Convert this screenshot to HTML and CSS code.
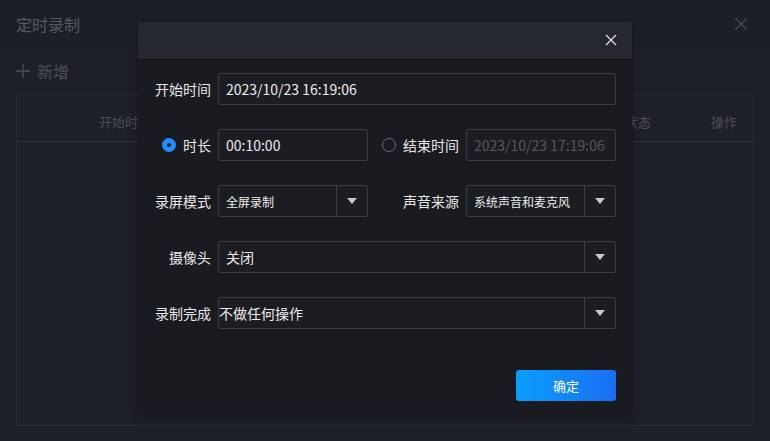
FILE: index.html
```html
<!DOCTYPE html>
<html lang="zh-CN">
<head>
  <meta charset="UTF-8">
  <title>定时录制</title>
  <link rel="stylesheet" href="styles.css">
</head>
<body>
  <!-- 背景页面 -->
  <div class="page">
    <div class="page-header">
      <span class="page-title">定时录制</span>
      <svg class="page-close" width="14" height="14" viewBox="0 0 14 14">
        <path d="M1 1 L13 13 M13 1 L1 13" stroke="#4a4d56" stroke-width="1.2" fill="none"/>
      </svg>
    </div>
    <div class="toolbar">
      <svg class="plus" width="14" height="14" viewBox="0 0 14 14">
        <path d="M7 0 V14 M0 7 H14" stroke="#4c4f58" stroke-width="1.4" fill="none"/>
      </svg>
      新增
    </div>
    <div class="table">
      <div class="table-head">
        <span class="th th-start">开始时间</span>
        <span class="th th-state">状态</span>
        <span class="th th-op">操作</span>
      </div>
    </div>
  </div>

  <!-- 弹窗 -->
  <div class="dialog">
    <div class="dialog-header">
      <svg class="dialog-close" width="12" height="12" viewBox="0 0 12 12">
        <path d="M1 1 L11 11 M11 1 L1 11" stroke="#e0e0e0" stroke-width="1.3" fill="none"/>
      </svg>
    </div>
    <div class="dialog-body">

      <div class="row">
        <label class="lbl">开始时间</label>
        <div class="field wide">2023/10/23 16:19:06</div>
      </div>

      <div class="row">
        <div class="half">
          <label class="lbl"><span class="radio checked"></span>时长</label>
          <div class="field">00:10:00</div>
        </div>
        <div class="half">
          <label class="lbl lbl-r"><span class="radio"></span>结束时间</label>
          <div class="field disabled">2023/10/23 17:19:06</div>
        </div>
      </div>

      <div class="row">
        <div class="half">
          <label class="lbl">录屏模式</label>
          <div class="field select small">全屏录制<span class="arrow"></span></div>
        </div>
        <div class="half">
          <label class="lbl lbl-r">声音来源</label>
          <div class="field select small">系统声音和麦克风<span class="arrow"></span></div>
        </div>
      </div>

      <div class="row">
        <label class="lbl">摄像头</label>
        <div class="field wide select">关闭<span class="arrow"></span></div>
      </div>

      <div class="row">
        <label class="lbl">录制完成</label>
        <div class="field wide select flush">不做任何操作<span class="arrow"></span></div>
      </div>

      <div class="footer">
        <button class="btn-ok">确定</button>
      </div>
    </div>
  </div>
</body>
</html>
```

FILE: styles.css
```css
body {
  margin: 0;
  padding: 0;
  width: 770px;
  height: 441px;
  overflow: hidden;
  background-color: #1e2029;
  font-family: "Noto Sans CJK SC", "Noto Sans", sans-serif;
  color: #e8e8e8;
  position: relative;
}

.page {
  height: 441px;
}

.page-header {
  height: 48px;
  background-color: #1d1f27;
  display: flex;
  align-items: center;
  justify-content: space-between;
  padding: 0 22px 0 16px;
}

.page-title {
  font-size: 16px;
  color: #565962;
}

.toolbar {
  height: 46px;
  display: flex;
  align-items: center;
  padding: 0 16px;
  font-size: 16px;
  color: #4c4f58;
  gap: 7px;
}

.table {
  margin: 1px 16px 0;
  height: 329px;
  border: 1px solid #262932;
}

.table-head {
  height: 45px;
  border-bottom: 1px solid #2e313a;
  position: relative;
  font-size: 13px;
  color: #4a4d56;
}

.th {
  position: absolute;
  top: 16px;
}

.th-start { left: 82px; }
.th-state { left: 608px; }
.th-op { left: 694px; }

/* 弹窗 */
.dialog {
  position: absolute;
  left: 138px;
  top: 22px;
  width: 494px;
  height: 395px;
  background-color: #1a1b20;
  box-shadow: 0 0 8px rgba(0, 0, 0, 0.3);
}

.dialog-header {
  height: 35px;
  background-color: #252830;
  border-bottom: 1px solid #2e3038;
  display: flex;
  align-items: center;
  justify-content: flex-end;
  padding-right: 15px;
}

.dialog-body {
  padding: 15px 16px 16px 0;
  display: flex;
  flex-direction: column;
  gap: 24px;
}

.row {
  display: flex;
  height: 32px;
}

.half {
  display: flex;
}

.lbl {
  width: 73px;
  padding-right: 7px;
  flex-shrink: 0;
  display: flex;
  align-items: center;
  justify-content: flex-end;
  font-size: 14px;
  color: #e8e8e8;
}

.lbl-r {
  width: 91px;
}

.radio {
  width: 14px;
  height: 14px;
  box-sizing: border-box;
  border-radius: 50%;
  border: 1px solid #6a6c72;
  margin-right: 7px;
  position: relative;
}

.radio.checked {
  background-color: #1e8fff;
  border-color: #1e8fff;
}

.radio.checked::after {
  content: "";
  position: absolute;
  left: 4px;
  top: 4px;
  width: 4px;
  height: 4px;
  border-radius: 50%;
  background-color: #1a1b20;
}

.field {
  width: 150px;
  height: 32px;
  box-sizing: border-box;
  border: 1px solid #3a3c42;
  border-radius: 2px;
  background-color: #1c1d22;
  padding: 0 7px;
  display: flex;
  align-items: center;
  font-size: 14px;
  color: #ececec;
  position: relative;
}

.field.wide {
  width: 398px;
}

.field.disabled {
  color: #55575d;
}

.field.small {
  font-size: 12px;
}

.field.flush {
  padding-left: 0;
}

.select {
  padding-right: 30px;
}

.arrow {
  position: absolute;
  right: 0;
  top: 0;
  width: 30px;
  height: 30px;
  border-left: 1px solid #3a3c42;
}

.arrow::after {
  content: "";
  position: absolute;
  left: 10px;
  top: 12px;
  border-left: 5px solid transparent;
  border-right: 5px solid transparent;
  border-top: 6px solid #c8c8c8;
}

.footer {
  display: flex;
  justify-content: flex-end;
  margin-top: 17px;
}

.btn-ok {
  width: 100px;
  height: 31px;
  border: none;
  border-radius: 3px;
  background: linear-gradient(90deg, #0a9dff, #1a6ff2);
  color: #ffffff;
  font-family: "Noto Sans CJK SC", sans-serif;
  font-size: 13px;
  cursor: pointer;
}
```
